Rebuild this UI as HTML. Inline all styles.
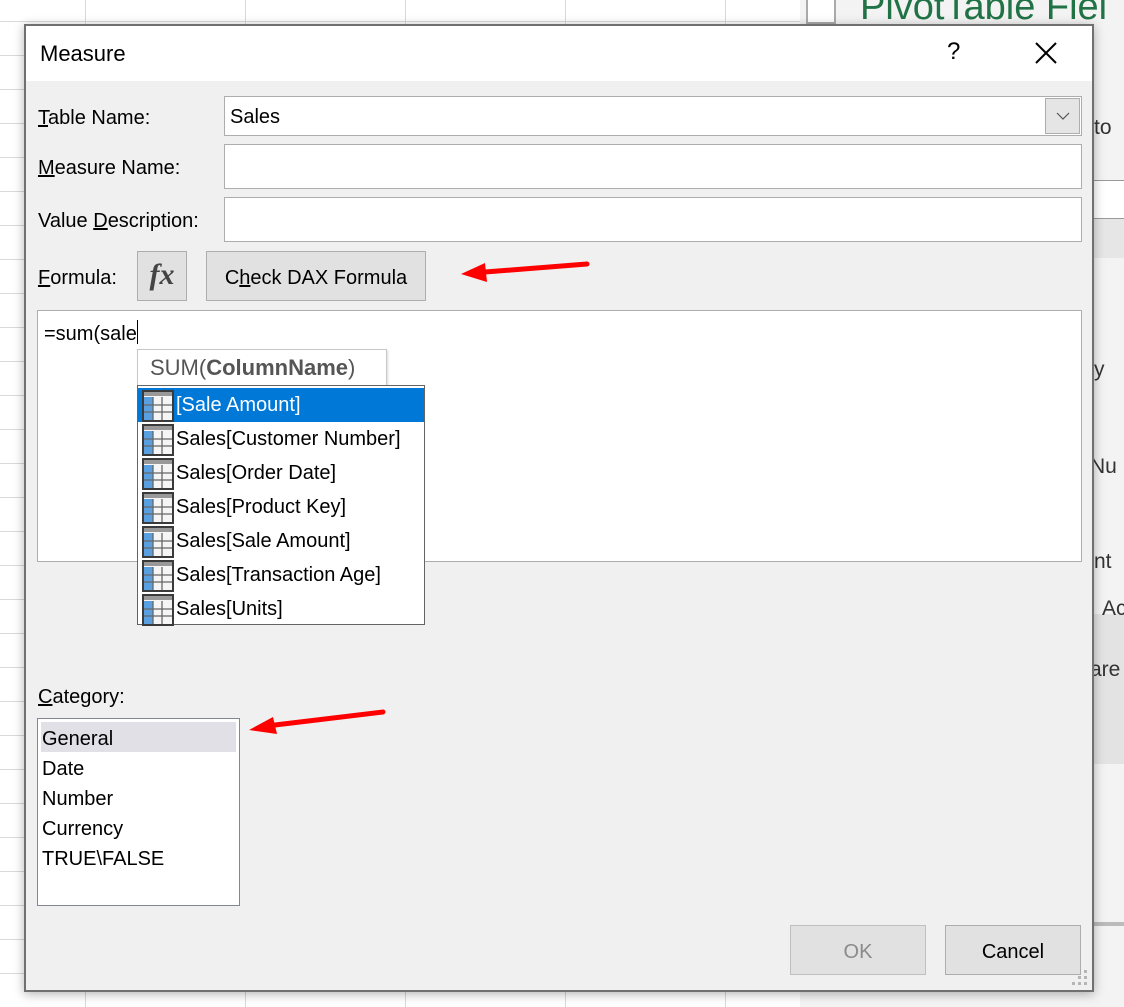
<!DOCTYPE html>
<html><head><style>
*{margin:0;padding:0;box-sizing:border-box}
body{width:1124px;height:1007px;position:relative;overflow:hidden;background:#fff;font-family:"Liberation Sans",sans-serif;color:#000}
.a{position:absolute}
.t{font-size:20px;white-space:nowrap}
.box{position:absolute;background:#fff;border:1px solid #adadad}
.btn{position:absolute;background:#e1e1e1;border:1px solid #adadad;font-size:20px;text-align:center}
.ic{display:inline-block;width:32px;height:32px;vertical-align:middle;margin-right:2px}
.row{height:34px;line-height:34px;font-size:20px;white-space:nowrap;padding-left:4px}
</style></head><body>
<div class="a" style="left:0;top:0;width:800px;height:1007px;background:
repeating-linear-gradient(90deg,transparent 0 85px,#d9d9d9 85px 86px,transparent 86px 160px),
repeating-linear-gradient(0deg,transparent 0 33px,#d9d9d9 33px 34px)"></div>
<div class="a" style="left:800px;top:0;width:324px;height:1007px;background:#f3f3f3"></div>
<div class="a" style="left:1080px;top:180px;width:44px;height:40px;background:#fff;border-top:1px solid #999"></div>
<div class="a" style="left:1080px;top:218px;width:44px;height:40px;background:#e6e6e6;border-top:1px solid #999"></div>
<div class="a" style="left:1093px;top:614px;width:31px;height:150px;background:#e3e3e3"></div>
<div class="a" style="left:1093px;top:922px;width:31px;height:4px;background:#bbb"></div>
<div class="a" style="left:806px;top:0;width:30px;height:24px;border:2px solid #aaa;border-top:none;background:#fff"></div>
<div class="a" style="left:860px;top:-14px;font-size:38px;color:#217346;white-space:nowrap">PivotTable Fiel</div>
<div class="a t" style="left:1094px;top:116px;color:#333;font-size:21px">to</div>
<div class="a t" style="left:1094px;top:358px;color:#333;font-size:21px">y</div>
<div class="a t" style="left:1090px;top:455px;color:#333;font-size:21px">Nu</div>
<div class="a t" style="left:1094px;top:550px;color:#333;font-size:21px">nt</div>
<div class="a t" style="left:1102px;top:597px;color:#333;font-size:21px">Ac</div>
<div class="a t" style="left:1090px;top:658px;color:#333;font-size:21px">are</div>
<div class="a" style="left:24px;top:24px;width:1070px;height:968px;background:#f0f0f0;border:2px solid #707070;box-shadow:0 2px 10px rgba(0,0,0,.3)"></div>
<div class="a" style="left:26px;top:26px;width:1066px;height:55px;background:#fff"></div>
<div class="a" style="left:40px;top:41px;font-size:22px">Measure</div>
<div class="a" style="left:947px;top:38px;font-size:24px">?</div>
<svg class="a" style="left:1035px;top:42px" width="22" height="22"><path d="M1 1L21 21M21 1L1 21" stroke="#000" stroke-width="2"/></svg>

<div class="a t" style="left:38px;top:107px"><u>T</u>able Name:</div>
<div class="box" style="left:224px;top:96px;width:858px;height:40px"><span class="t" style="position:absolute;left:5px;top:9px">Sales</span>
<div class="a" style="right:1px;top:1px;width:35px;height:36px;background:#e5e5e5;border:1px solid #adadad"></div>
<svg class="a" style="right:11px;top:14px" width="14" height="10"><path d="M1 2L7 8L13 2" stroke="#555" fill="none" stroke-width="1.2"/></svg></div>
<div class="a t" style="left:38px;top:157px"><u>M</u>easure Name:</div>
<div class="box" style="left:224px;top:144px;width:858px;height:45px"></div>
<div class="a t" style="left:38px;top:210px">Value <u>D</u>escription:</div>
<div class="box" style="left:224px;top:197px;width:858px;height:45px"></div>
<div class="a t" style="left:38px;top:267px"><u>F</u>ormula:</div>
<div class="btn" style="left:137px;top:251px;width:50px;height:50px;font-family:'Liberation Serif',serif;font-style:italic;font-weight:bold;font-size:30px;line-height:46px;color:#444">fx</div>
<div class="btn" style="left:206px;top:251px;width:220px;height:50px;line-height:52px">C<u>h</u>eck DAX Formula</div>
<svg class="a" style="left:455px;top:255px" width="140" height="30"><path d="M132 9L30 17" stroke="#f00" stroke-width="5" stroke-linecap="round"/><path d="M6 19L30 8L32 27Z" fill="#f00"/></svg>

<div class="box" style="left:37px;top:310px;width:1045px;height:252px"></div>
<div class="a t" style="left:44px;top:323px">=sum(sale</div>
<div class="a" style="left:137px;top:320px;width:1px;height:24px;background:#000"></div>

<div class="a" style="left:137px;top:349px;width:250px;height:38px;background:#fff;border:1px solid #c8c8c8;box-shadow:1px 1px 2px rgba(0,0,0,.15)"><span style="position:absolute;left:12px;top:5px;font-size:22px;color:#555;white-space:nowrap">SUM(<b>ColumnName</b>)</span></div>
<div class="a" style="left:137px;top:385px;width:288px;height:240px;background:#fff;border:1px solid #646464;padding-top:2px">
<div class="row" style="background:#0078d7;color:#fff"><svg class="ic" viewBox="0 0 32 32"><rect x="1" y="1" width="30" height="30" fill="#f5f5f5" stroke="#3a3a3a" stroke-width="2"/><rect x="2" y="2" width="28" height="4" fill="#999"/><rect x="2" y="7" width="9" height="23" fill="#5aa0e0"/><path d="M11 7V30M20 7V30M2 15H30M2 22H30" stroke="#666" stroke-width="1.3"/></svg>[Sale Amount]</div>
<div class="row"><svg class="ic" viewBox="0 0 32 32"><rect x="1" y="1" width="30" height="30" fill="#f5f5f5" stroke="#3a3a3a" stroke-width="2"/><rect x="2" y="2" width="28" height="4" fill="#999"/><rect x="2" y="7" width="9" height="23" fill="#5aa0e0"/><path d="M11 7V30M20 7V30M2 15H30M2 22H30" stroke="#666" stroke-width="1.3"/></svg>Sales[Customer Number]</div>
<div class="row"><svg class="ic" viewBox="0 0 32 32"><rect x="1" y="1" width="30" height="30" fill="#f5f5f5" stroke="#3a3a3a" stroke-width="2"/><rect x="2" y="2" width="28" height="4" fill="#999"/><rect x="2" y="7" width="9" height="23" fill="#5aa0e0"/><path d="M11 7V30M20 7V30M2 15H30M2 22H30" stroke="#666" stroke-width="1.3"/></svg>Sales[Order Date]</div>
<div class="row"><svg class="ic" viewBox="0 0 32 32"><rect x="1" y="1" width="30" height="30" fill="#f5f5f5" stroke="#3a3a3a" stroke-width="2"/><rect x="2" y="2" width="28" height="4" fill="#999"/><rect x="2" y="7" width="9" height="23" fill="#5aa0e0"/><path d="M11 7V30M20 7V30M2 15H30M2 22H30" stroke="#666" stroke-width="1.3"/></svg>Sales[Product Key]</div>
<div class="row"><svg class="ic" viewBox="0 0 32 32"><rect x="1" y="1" width="30" height="30" fill="#f5f5f5" stroke="#3a3a3a" stroke-width="2"/><rect x="2" y="2" width="28" height="4" fill="#999"/><rect x="2" y="7" width="9" height="23" fill="#5aa0e0"/><path d="M11 7V30M20 7V30M2 15H30M2 22H30" stroke="#666" stroke-width="1.3"/></svg>Sales[Sale Amount]</div>
<div class="row"><svg class="ic" viewBox="0 0 32 32"><rect x="1" y="1" width="30" height="30" fill="#f5f5f5" stroke="#3a3a3a" stroke-width="2"/><rect x="2" y="2" width="28" height="4" fill="#999"/><rect x="2" y="7" width="9" height="23" fill="#5aa0e0"/><path d="M11 7V30M20 7V30M2 15H30M2 22H30" stroke="#666" stroke-width="1.3"/></svg>Sales[Transaction Age]</div>
<div class="row"><svg class="ic" viewBox="0 0 32 32"><rect x="1" y="1" width="30" height="30" fill="#f5f5f5" stroke="#3a3a3a" stroke-width="2"/><rect x="2" y="2" width="28" height="4" fill="#999"/><rect x="2" y="7" width="9" height="23" fill="#5aa0e0"/><path d="M11 7V30M20 7V30M2 15H30M2 22H30" stroke="#666" stroke-width="1.3"/></svg>Sales[Units]</div>
</div>

<div class="a t" style="left:38px;top:686px"><u>C</u>ategory:</div>
<div class="box" style="left:37px;top:718px;width:203px;height:188px;border-color:#828790">
<div style="position:absolute;left:3px;top:3px;width:195px;height:30px;background:#e0e0e6"></div>
<div class="t" style="position:absolute;left:4px;top:5px;line-height:30px">General<br>Date<br>Number<br>Currency<br>TRUE\FALSE</div>
</div>
<svg class="a" style="left:245px;top:705px" width="145" height="30"><path d="M138 7L30 20" stroke="#f00" stroke-width="5" stroke-linecap="round"/><path d="M4 25L28 12L32 29Z" fill="#f00"/></svg>

<div class="btn" style="left:790px;top:925px;width:136px;height:50px;line-height:52px;color:#8a8a8a;border-color:#bfbfbf">OK</div>
<div class="btn" style="left:945px;top:925px;width:136px;height:50px;line-height:52px">Cancel</div>
<svg class="a" style="left:1072px;top:970px" width="18" height="18"><g fill="#b5b5b5"><rect x="12" y="0" width="3" height="3"/><rect x="6" y="6" width="3" height="3"/><rect x="12" y="6" width="3" height="3"/><rect x="0" y="12" width="3" height="3"/><rect x="6" y="12" width="3" height="3"/><rect x="12" y="12" width="3" height="3"/></g></svg>
</body></html>
